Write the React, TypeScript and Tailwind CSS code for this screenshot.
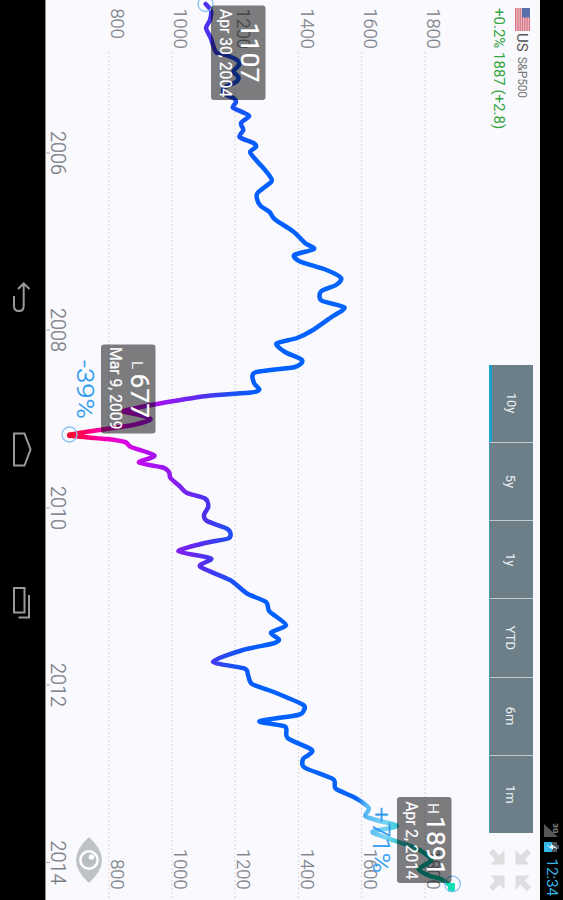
const RANGES = ['10y', '5y', '1y', 'YTD', '6m', '1m'];

const GRID = [
  { label: '800', level: 109 },
  { label: '1000', level: 172 },
  { label: '1200', level: 235 },
  { label: '1400', level: 298.5 },
  { label: '1600', level: 361.5 },
  { label: '1800', level: 425 },
];

const YEARS = [
  { label: '2006', x: 153 },
  { label: '2008', x: 330 },
  { label: '2010', x: 508 },
  { label: '2012', x: 685 },
  { label: '2014', x: 862.5 },
];

// [x, level] pairs, level counted upwards from the bottom of the screen
const POINTS: [number, number][] = [
  [4, 205.7], [11, 211], [20, 210], [28, 206], [38, 210.7], [48, 214], [53, 217], [55.5, 227],
  [60, 237], [65, 239], [71.5, 233.5], [77, 238.5], [82, 236], [88, 224], [94, 224], [98, 233.5], [102, 236],
  [107.5, 232.8], [112, 242], [116, 249.2], [123, 241], [130, 243.3], [137, 239.5], [143, 253.5],
  [147, 256], [152, 250], [160, 256], [168, 263.3], [175, 269], [181.5, 271.5], [193, 257.5], [200, 257.3],
  [206, 260.7], [212, 269.5], [219.5, 275], [231.5, 293.3], [243, 305], [249, 314], [255, 294.3],
  [261.5, 300], [270, 326.5], [278, 341], [285, 336], [291.5, 321], [300.5, 321.5], [307.5, 344.5],
  [317, 331.5], [330, 313], [338, 297], [343.5, 276.5], [352, 285], [360, 302], [367, 295],
  [372.5, 255], [383, 254], [389.5, 259.3], [392.5, 251], [396, 207], [404, 157], [411, 124],
  [415, 140], [419.5, 150.5], [425, 133], [429.5, 103], [435.3, 69.5], [439, 107], [442, 125],
  [447, 131], [455.5, 154.5], [462.5, 139], [467.5, 163], [472, 169], [478, 170.5], [486.5, 180],
  [493, 187], [498.5, 205], [506.5, 208.3], [515, 204], [521, 207], [528.5, 226.5], [533.5, 230.5],
  [538.5, 228], [543.5, 203], [551.3, 178.5], [558.5, 211], [566.5, 200], [580, 230], [593.5, 247],
  [602, 266], [611.5, 269.5], [625, 286], [632.5, 271], [639.5, 279], [643.5, 273], [650, 243],
  [661.7, 213], [668.5, 244.5], [675, 248], [684, 252], [691.5, 272.5], [704.5, 302.5], [710, 304],
  [715, 298], [721.3, 259.5], [726.5, 285], [738, 287.5], [749.5, 311.5], [755, 308.5], [759, 303],
  [767.5, 304.5], [779, 333], [788.5, 335.5], [796, 351.5], [802, 362], [808.5, 369], [816, 365.5],
  [820, 376], [826, 397], [831.5, 373], [835.5, 380], [841.5, 397], [848.5, 417], [860, 431.5],
  [869, 418.5], [876, 430], [879, 441], [887, 452.5],
];

const toY = (level: number) => 540 - level;

// Catmull-Rom through all the points, with a soft tension
function linePath(points: [number, number][]) {
  const p = points.map(([x, level]) => [x, toY(level)]);
  let d = `M${p[0][0]} ${p[0][1]}`;
  for (let i = 0; i < p.length - 1; i++) {
    const a = p[Math.max(i - 1, 0)];
    const b = p[i];
    const c = p[i + 1];
    const e = p[Math.min(i + 2, p.length - 1)];
    const k = 8;
    d += `C${b[0] + (c[0] - a[0]) / k} ${b[1] + (c[1] - a[1]) / k} ${c[0] - (e[0] - b[0]) / k} ${c[1] - (e[1] - b[1]) / k} ${c[0]} ${c[1]}`;
  }
  return d;
}

// Line colour follows the price: red at the low, blue in the middle, green at the high
const STOPS: [number, string][] = [
  [66, '#ff1020'],
  [82, '#ff0058'],
  [105, '#f800b8'],
  [122, '#e000e0'],
  [150, '#b010f0'],
  [172, '#8c1cf0'],
  [205, '#5030ee'],
  [232, '#1c50f4'],
  [262, '#0060ff'],
  [357, '#0864f8'],
  [366, '#58b8f4'],
  [385, '#78d4f4'],
  [400, '#30c8d0'],
  [420, '#00b8a0'],
  [440, '#00c0a0'],
  [455, '#10e8c0'],
];

type MarkerProps = {
  x: number;
  level: number;
  width: number;
  kind?: string;
  kindX?: number;
  value: string;
  valueX: number;
  valueWidth: number;
  date: string;
  dateX: number;
  dateWidth: number;
};

function Marker({ x, level, width, kind, kindX, value, valueX, valueWidth, date, dateX, dateWidth }: MarkerProps) {
  const top = toY(level);
  return (
    <g fill="#fff">
      <rect x={x} y={top} width={width} height="54.5" rx="3" fill="#000" fillOpacity="0.5" />
      {kind && (
        <text x={kindX} y={top + 24} fontSize="15.5" fillOpacity="0.9">
          {kind}
        </text>
      )}
      <text x={valueX} y={top + 25} fontSize="26.5" stroke="#fff" strokeWidth="0.2" textLength={valueWidth} lengthAdjust="spacingAndGlyphs">
        {value}
      </text>
      <text x={dateX} y={top + 46} fontSize="16.5" stroke="#fff" strokeWidth="0.2" textLength={dateWidth} lengthAdjust="spacingAndGlyphs">
        {date}
      </text>
    </g>
  );
}

function Chart() {
  return (
    <svg className="absolute inset-0" width="900" height="495" viewBox="0 0 900 495" fontFamily="Roboto, sans-serif">
      <defs>
        <linearGradient id="price" gradientUnits="userSpaceOnUse" x1="0" y1={toY(66)} x2="0" y2={toY(455)}>
          {STOPS.map(([level, color]) => (
            <stop key={level} offset={(level - 66) / 389} stopColor={color} />
          ))}
        </linearGradient>
      </defs>

      {GRID.map(({ label, level }) => (
        <g key={label} fill="#7f8489" fontSize="18" fontWeight="300" stroke="#7f8489" strokeWidth="0.2">
          <path d={`M52 ${toY(level)}H900`} stroke="#d3d3da" strokeWidth="1.2" strokeDasharray="1.5 2.5" />
          <text x="8.5" y={toY(level) - 2} textLength={label.length * 10.1} lengthAdjust="spacingAndGlyphs">
            {label}
          </text>
          <text x="889.5" y={toY(level) - 2} textAnchor="end" textLength={label.length * 10.1} lengthAdjust="spacingAndGlyphs">
            {label}
          </text>
        </g>
      ))}

      <path d="M0 494.5H900" stroke="#8b8b90" />
      {YEARS.map(({ label, x }) => (
        <g key={label}>
          <path d={`M${x} 490V495`} stroke="#a8a8ae" />
          <text
            x={x}
            y="489"
            fill="#777c82"
            stroke="#777c82"
            strokeWidth="0.2"
            fontSize="19.5"
            fontWeight="300"
            textAnchor="middle"
            textLength="44"
            lengthAdjust="spacingAndGlyphs"
          >
            {label}
          </text>
        </g>
      ))}

      <path d={linePath(POINTS)} fill="none" stroke="url(#price)" strokeWidth="4.5" strokeLinejoin="round" strokeLinecap="round" />
      <circle cx="435.3" cy={toY(70)} r="3" fill="#f00838" />
      <rect x="883" y={toY(455)} width="9" height="7" rx="1" fill="#10e0b4" />

      <g fill="none" stroke="#8cc4f4" strokeWidth="1.3">
        <circle cx="4" cy={toY(205.5)} r="7.5" />
        <circle cx="434.5" cy={toY(69.5)} r="7.5" />
        <circle cx="884" cy={toY(452.5)} r="7.8" />
      </g>

      <Marker x={5.5} level={265.5} width={94.5} value="1107" valueX={22.5} valueWidth={60} date="Apr 30, 2004" dateX={9} dateWidth={88} />
      <Marker x={344.5} level={155.5} width={89} kind="L" kindX={361} value="677" valueX={373.5} valueWidth={44.5} date="Mar 9, 2009" dateX={347} dateWidth={82.5} />
      <Marker x={797} level={451.5} width={86} kind="H" kindX={803} value="1891" valueX={816} valueWidth={60} date="Apr 2, 2014" dateX={801.5} dateWidth={78} />

      <g fill="#2f9bef" fontSize="24.5" fontWeight="300" stroke="#2f9bef" strokeWidth="0.3">
        <text x="360" y={toY(76.5)} textLength="59" lengthAdjust="spacingAndGlyphs">-39%</text>
        <text x="807" y={toY(372.5)} textLength="66" lengthAdjust="spacingAndGlyphs">+71%</text>
      </g>
    </svg>
  );
}

function StatusBar() {
  return (
    <div className="flex h-[23px] shrink-0 items-center justify-end bg-black pr-1">
      <span className="-mr-[11px] self-start pt-[3px] text-[8px] leading-[9px] font-bold text-[#8a8a8a]">3G</span>
      <svg width="32" height="23" viewBox="0 0 32 23" className="mr-1">
        <path d="M15 5V19H2Z" fill="#555" />
        <path d="M23 4h4v2h3v13h-10V6h3Z" fill="#4b5358" />
        <path d="M20 11h10v8h-10Z" fill="#33b5e5" />
        <path d="M26 6l-4 6h2.4l-1.2 4.5 4.6-6.5h-2.4l1.3-4Z" fill="#e8f4f8" />
      </svg>
      <span className="text-[15.5px] leading-[23px] tracking-[-0.2px] text-[#33b5e5]">12:34</span>
    </div>
  );
}

function Flag() {
  return (
    <svg width="23" height="15" viewBox="0 0 23 15">
      <rect width="23" height="15" fill="#f0c3cb" />
      {[0, 2.3, 4.6, 6.9, 9.2, 11.5, 13.8].map((y) => (
        <rect key={y} y={y} width="23" height="1.2" fill="#d4707f" />
      ))}
      <rect width="9.5" height="8" fill="#5a70ab" />
    </svg>
  );
}

function Quote() {
  return (
    <div className="w-[364.5px] pt-[9.5px] pl-2">
      <div className="flex h-[16px] items-center">
        <Flag />
        <span className="ml-[2px] text-[15px] leading-4 text-[#555]">US</span>
        <span className="ml-[5px] text-[12px] leading-4 tracking-[-0.2px] text-[#777]">S&amp;P500</span>
      </div>
      <div className="mt-[6px] text-[15px] leading-[18px] text-[#35a53f]">+0.2% 1887 (+2.8)</div>
    </div>
  );
}

function RangeTabs() {
  return (
    <div className="mt-[6.5px] flex h-[44.5px] w-[468.5px] bg-[#6c7e87]">
      {RANGES.map((range, i) => (
        <button
          key={range}
          className={`flex-1 pt-[2px] text-[13px] text-[#edf1f3] ${i > 0 ? 'border-l border-l-[#c3cbcf]' : ''} ${
            i === 0 ? 'border-b-[3px] border-b-[#17a2cb]' : 'border-b border-b-[#3f9ab8]'
          }`}
        >
          {range}
        </button>
      ))}
    </div>
  );
}

function CollapseIcon() {
  const arrow = 'M0 4L4 0L10.5 6L15.5 1.5V15.5H1L6.5 10.5Z';
  return (
    <svg width="42" height="42" viewBox="0 0 42 42" fill="#dedee0" className="mt-[9px] ml-4">
      <path d={arrow} />
      <path d={arrow} transform="translate(42 0) scale(-1 1)" />
      <path d={arrow} transform="translate(0 42) scale(1 -1)" />
      <path d={arrow} transform="translate(42 42) scale(-1 -1)" />
    </svg>
  );
}

function EyeIcon() {
  return (
    <svg width="46" height="26" viewBox="0 0 46 26" className="absolute top-[438px] left-[837px]">
      <path d="M0 13Q12 0 23 0Q34 0 46 13Q34 26 23 26Q12 26 0 13Z" fill="#bdc3c5" />
      <circle cx="23" cy="13" r="8.7" fill="#bdc3c5" stroke="#fff" strokeWidth="2.4" />
      <circle cx="23" cy="13" r="5.8" fill="#b7bec0" />
      <circle cx="20" cy="10.5" r="2.8" fill="#fff" />
    </svg>
  );
}

function NavBar() {
  return (
    <div className="flex h-[45px] shrink-0 justify-center bg-black text-[#9a9a9a]">
      <button className="flex w-[153px] justify-center">
        <svg width="34" height="45" viewBox="281 0 34 45" fill="none" stroke="currentColor" strokeWidth="2">
          <path d="M290 15.5L284.5 21.3L290 27M285 21.3H307Q312 21.3 312 26Q312 31 307 31H297" />
        </svg>
      </button>
      <button className="flex w-[153px] justify-center">
        <svg width="38" height="45" viewBox="432 0 38 45" fill="none" stroke="currentColor" strokeWidth="2">
          <path d="M434.5 31H466.5V20.5L450.5 14.5L434.5 20.5Z" />
        </svg>
      </button>
      <button className="flex w-[153px] justify-center">
        <svg width="34" height="45" viewBox="587 0 34 45" fill="none" stroke="currentColor" strokeWidth="2">
          <path d="M589 20.5H613.5V31H589ZM596 16H618.5V26.5" />
        </svg>
      </button>
    </div>
  );
}

// Landscape screen turned a quarter clockwise to fit a portrait viewport
export default function App() {
  return (
    <div className="h-[900px] w-[563px] overflow-hidden bg-black font-[Roboto,sans-serif]">
      <div className="flex h-[563px] w-[900px] origin-top-left translate-x-[563px] rotate-90 flex-col">
        <StatusBar />
        <div className="relative h-[495px] bg-[#f9f9fe]">
          <Chart />
          <div className="relative flex items-start">
            <Quote />
            <RangeTabs />
            <CollapseIcon />
          </div>
          <EyeIcon />
        </div>
        <NavBar />
      </div>
    </div>
  );
}
